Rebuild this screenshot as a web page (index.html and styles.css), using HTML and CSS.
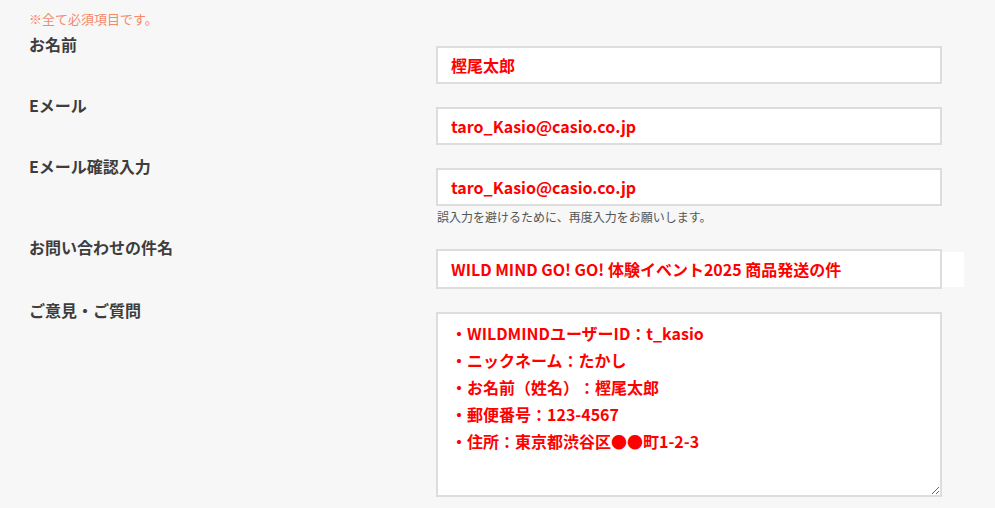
FILE: index.html
```html
<!DOCTYPE html>
<html lang="ja">
<head>
	<meta charset="UTF-8">
	<title>お問い合わせ</title>
	<link rel="stylesheet" href="styles.css">
</head>
<body>
	<div id="wrapper">
		<p class="note">※全て必須項目です。</p>
		<form class="contact-form">
			<div class="row">
				<label for="nameInput">お名前</label>
				<div class="field">
					<input id="nameInput" type="text" value="樫尾太郎">
				</div>
			</div>
			<div class="row">
				<label for="mailInput">Eメール</label>
				<div class="field">
					<input id="mailInput" type="text" value="taro_Kasio@casio.co.jp">
				</div>
			</div>
			<div class="row">
				<label for="mailConfirm">Eメール確認入力</label>
				<div class="field">
					<input id="mailConfirm" type="text" value="taro_Kasio@casio.co.jp">
					<p class="help">誤入力を避けるために、再度入力をお願いします。</p>
				</div>
			</div>
			<div class="row">
				<label for="subjectInput">お問い合わせの件名</label>
				<div class="field field-subject">
					<input id="subjectInput" class="tall" type="text" value="WILD MIND GO! GO! 体験イベント2025 商品発送の件">
					<span class="patch"></span>
				</div>
			</div>
			<div class="row">
				<label for="messageInput">ご意見・ご質問</label>
				<div class="field">
<textarea id="messageInput">・WILDMINDユーザーID：t_kasio
・ニックネーム：たかし
・お名前（姓名）：樫尾太郎
・郵便番号：123-4567
・住所：東京都渋谷区●●町1-2-3</textarea>
				</div>
			</div>
		</form>
	</div>
</body>
</html>
```

FILE: styles.css
```css
body {
	margin: 0;
	background-color: #f7f7f7;
	font-family: "Noto Sans CJK JP", "Noto Sans", sans-serif;
	text-spacing-trim: space-all;
}
#wrapper {
	padding: 10px 0 0 29px;
}
.note {
	margin: 0;
	font-size: 13px;
	line-height: 18px;
	color: #f5896a;
}
.contact-form {
	display: flex;
	flex-direction: column;
	gap: 9px;
	margin-top: 4px;
}
.row {
	display: grid;
	grid-template-columns: 407px 506px;
	align-items: start;
}
label {
	font-size: 16px;
	font-weight: bold;
	line-height: 24px;
	color: #3d3d3d;
}
.field {
	padding-top: 14px;
}
.field-subject {
	display: flex;
	align-items: center;
}
.patch {
	flex: none;
	width: 22px;
	height: 35px;
	background-color: #fff;
}
input,
textarea {
	box-sizing: border-box;
	display: block;
	width: 506px;
	margin: 0;
	border: 2px solid #dddddd;
	background-color: #fff;
	font-family: "Noto Sans CJK JP", "Noto Sans", sans-serif;
	font-size: 16px;
	font-weight: bold;
	color: #ff0000;
	outline: none;
	text-spacing-trim: space-all;
}
input {
	flex: none;
	height: 38px;
	padding: 0 13px;
}
input.tall {
	height: 40px;
}
textarea {
	height: 185px;
	padding: 6px 13px;
	line-height: 27px;
}
.help {
	margin: 2px 0 0 1px;
	font-size: 12px;
	line-height: 18px;
	color: #555;
}
```
